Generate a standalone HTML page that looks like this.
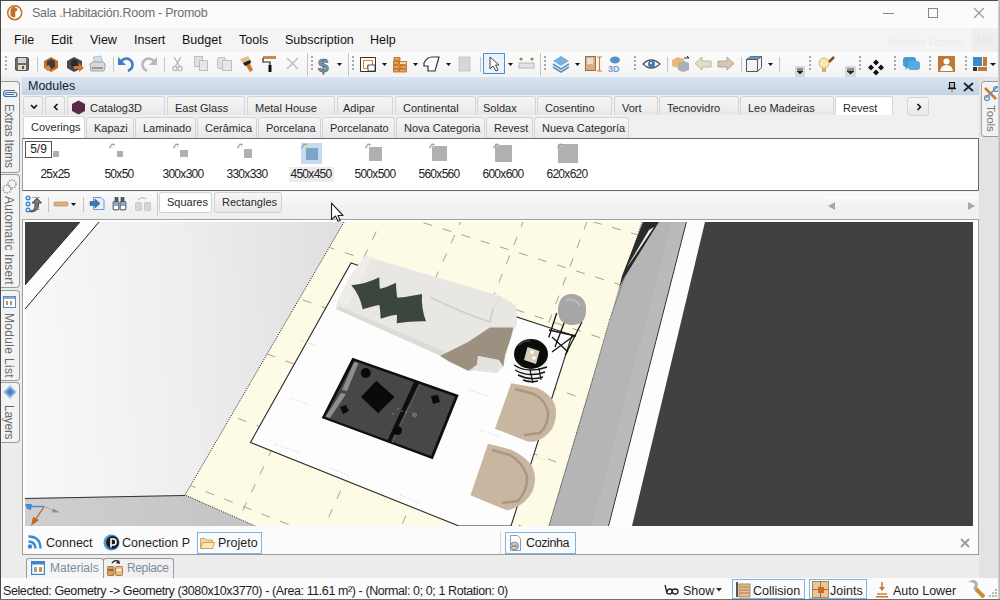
<!DOCTYPE html>
<html><head><meta charset="utf-8">
<style>
*{margin:0;padding:0;box-sizing:border-box}
html,body{width:1000px;height:600px;overflow:hidden;background:#ececec;font-family:"Liberation Sans",sans-serif;font-size:12px;color:#1e1e1e}
.a{position:absolute}
#title{left:0;top:0;width:1000px;height:28px;background:#fbfbfb;border-top:1px solid #4a4a4a}
#menu{left:0;top:28px;width:1000px;height:24px;background:#f4f4f4}
#menu span{position:absolute;top:5px;font-size:12.5px;color:#111}
#tb{left:0;top:52px;width:1000px;height:25px;background:linear-gradient(#fdfdfd,#f4f4f4)}
.sep{position:absolute;width:1px;background:#c8c8c8}
.grip{position:absolute;width:2px;border-left:2px dotted #a0a0a0}
#modhdr{left:22px;top:77px;width:957px;height:18px;background:linear-gradient(#d9e5f3,#c4d2e3)}
.tab{position:absolute;height:19px;border:1px solid #d4d4d4;border-bottom:none;border-radius:3px 3px 0 0;background:linear-gradient(#f6f6f6,#e8e8e8);font-size:11px;color:#2a2a2a;text-align:left;padding-left:7px;padding-top:1px;line-height:20px;white-space:nowrap}
.tab.sel{background:#fff}
.vt{position:absolute;left:1px;width:19px;border:1px solid #9a9a9a;border-left:none;border-radius:0 4px 4px 0;background:#f3f3f3}
.vt span{position:absolute;left:1px;writing-mode:vertical-rl;font-size:12px;color:#6a6a6a;white-space:nowrap}
.th{position:absolute;background:#b0b0b0}
.lbl{position:absolute;top:167px;font-size:12px;letter-spacing:-0.7px;color:#222;text-align:center;width:64px}
</style></head><body>
<!-- window border -->
<div class="a" style="left:0;top:0;width:1px;height:600px;background:#4a4a4a;z-index:50"></div>
<div class="a" style="left:998px;top:0;width:2px;height:600px;background:linear-gradient(90deg,#d8d8d8,#b0b0b0);z-index:50"></div>
<div class="a" style="left:0;top:599px;width:1000px;height:1px;background:#6e6e6e;z-index:50"></div>

<!-- TITLE -->
<div id="title" class="a">
  <svg class="a" style="left:6px;top:3px" width="18" height="18" viewBox="6 3 18 18"><circle cx="14.7" cy="11.7" r="7" fill="#fff" stroke="#c0702a" stroke-width="1.5"/><path d="M10.5,8.5 Q12,5.5 15,5.5 L15.5,7 L17.5,7.5 L17,10 L15.3,10.5 L15.3,16.5 Q12,17 10.5,14.5 Z" fill="#c0702a"/></svg>
  <span class="a" style="left:32px;top:5px;font-size:12.5px;letter-spacing:-0.24px;color:#6e6e6e">Sala .Habitación.Room - Promob</span>
  <div class="a" style="left:883px;top:12px;width:11px;height:1px;background:#888"></div>
  <div class="a" style="left:928px;top:7px;width:10px;height:10px;border:1px solid #888"></div>
  <svg class="a" style="left:973px;top:6px" width="12" height="12"><path d="M1 1L11 11M11 1L1 11" stroke="#999" stroke-width="1.2"/></svg>
</div>

<!-- MENU -->
<div id="menu" class="a">
  <span style="left:14px">File</span><span style="left:51px">Edit</span><span style="left:90px">View</span><span style="left:134px">Insert</span><span style="left:182px">Budget</span><span style="left:239px">Tools</span><span style="left:285px">Subscription</span><span style="left:370px">Help</span>
</div>

<!-- TOOLBAR -->
<div id="tb" class="a"></div>
<svg class="a" style="left:0;top:52px" width="1000" height="26" viewBox="0 52 1000 26">
  <!-- segment backgrounds / ends -->
  <rect x="1" y="52" width="999" height="25" fill="url(#tbg)"/>
  <defs><linearGradient id="tbg" x1="0" y1="0" x2="0" y2="1"><stop offset="0" stop-color="#fcfcfc"/><stop offset="1" stop-color="#f3f3f3"/></linearGradient></defs>
  <!-- grips -->
  <g fill="#a8a8a8">
    <rect x="5" y="56" width="2" height="2"/><rect x="5" y="60" width="2" height="2"/><rect x="5" y="64" width="2" height="2"/><rect x="5" y="68" width="2" height="2"/>
    <rect x="311" y="56" width="2" height="2"/><rect x="311" y="60" width="2" height="2"/><rect x="311" y="64" width="2" height="2"/><rect x="311" y="68" width="2" height="2"/>
    <rect x="352" y="56" width="2" height="2"/><rect x="352" y="60" width="2" height="2"/><rect x="352" y="64" width="2" height="2"/><rect x="352" y="68" width="2" height="2"/>
    <rect x="544" y="56" width="2" height="2"/><rect x="544" y="60" width="2" height="2"/><rect x="544" y="64" width="2" height="2"/><rect x="544" y="68" width="2" height="2"/>
    <rect x="634" y="56" width="2" height="2"/><rect x="634" y="60" width="2" height="2"/><rect x="634" y="64" width="2" height="2"/><rect x="634" y="68" width="2" height="2"/>
    <rect x="809" y="56" width="2" height="2"/><rect x="809" y="60" width="2" height="2"/><rect x="809" y="64" width="2" height="2"/><rect x="809" y="68" width="2" height="2"/>
    <rect x="859" y="56" width="2" height="2"/><rect x="859" y="60" width="2" height="2"/><rect x="859" y="64" width="2" height="2"/><rect x="859" y="68" width="2" height="2"/>
    <rect x="894" y="56" width="2" height="2"/><rect x="894" y="60" width="2" height="2"/><rect x="894" y="64" width="2" height="2"/><rect x="894" y="68" width="2" height="2"/>
    <rect x="929" y="56" width="2" height="2"/><rect x="929" y="60" width="2" height="2"/><rect x="929" y="64" width="2" height="2"/><rect x="929" y="68" width="2" height="2"/>
    <rect x="965" y="56" width="2" height="2"/><rect x="965" y="60" width="2" height="2"/><rect x="965" y="64" width="2" height="2"/><rect x="965" y="68" width="2" height="2"/>
  </g>
  <!-- separators -->
  <g fill="#c4c4c4">
    <rect x="37" y="57" width="1" height="15"/><rect x="113" y="57" width="1" height="15"/><rect x="164" y="57" width="1" height="15"/>
    <rect x="307" y="53" width="1" height="23"/><rect x="348" y="53" width="1" height="23"/>
    <rect x="480" y="57" width="1" height="15"/><rect x="540" y="53" width="1" height="23"/>
    <rect x="667" y="57" width="1" height="15"/><rect x="741" y="57" width="1" height="15"/><rect x="779" y="57" width="1" height="15"/>
  </g>
  <!-- dropdown arrows -->
  <g fill="#111">
    <path d="M337,63h5l-2.5,3z"/><path d="M382,63h5l-2.5,3z"/><path d="M413,63h5l-2.5,3z"/><path d="M446,63h5l-2.5,3z"/>
    <path d="M508,63h5l-2.5,3z"/><path d="M575,63h5l-2.5,3z"/><path d="M768,63h5l-2.5,3z"/><path d="M990,63h6l-3,3z"/>
  </g>
  <!-- save -->
  <rect x="15.5" y="57.5" width="13" height="13" rx="1.5" fill="#6b6b6b" stroke="#555"/>
  <rect x="18" y="58" width="8" height="5" fill="#d4d4d4"/>
  <rect x="18" y="65" width="8" height="5" fill="#e8dcc0"/><rect x="22" y="66" width="2" height="3" fill="#555"/>
  <!-- box icons -->
  <path d="M44,61 L51,57 L58,61 L58,68 L51,72 L44,68Z" fill="#c46e22"/>
  <path d="M47,61 L51,59 L55,61 L55,67 L51,69 L47,67Z" fill="#3d3d3d"/>
  <path d="M45,67 L49,65 L51,69 L47,71Z" fill="#d88a40"/>
  <path d="M67,61 L74,57 L82,61 L82,68 L74,72 L67,68Z" fill="#4a4a4a"/>
  <path d="M71,61 L74,59 L78,61 L78,65 L74,67 L71,65Z" fill="#2b2b2b"/>
  <path d="M74,66 L79,66 L79,63 L84,68 L79,72 L79,69 L74,69Z" fill="#d5782c"/>
  <!-- printer -->
  <path d="M93,57 L101,56 L103,63 L95,64Z" fill="#cde0f0" stroke="#8aa" stroke-width="0.5"/>
  <path d="M90,64 Q92,61 97,62 L103,62 Q106,63 105,67 L104,71 L91,71 Z" fill="#d8d8d8" stroke="#888" stroke-width="0.7"/>
  <rect x="92" y="67" width="11" height="2" fill="#9a9a9a"/>
  <!-- undo/redo -->
  <path d="M120,62 Q127,55 132,62 Q134,68 128,71" fill="none" stroke="#3c7fc4" stroke-width="2.6"/>
  <path d="M118,57 L118,65 L126,65Z" fill="#3c7fc4"/>
  <path d="M155,62 Q148,55 143,62 Q141,68 147,71" fill="none" stroke="#b8b8b8" stroke-width="2.6"/>
  <path d="M157,57 L157,65 L149,65Z" fill="#b8b8b8"/>
  <!-- scissors -->
  <path d="M174,57 L179.5,66 M181,57 L175.5,66" stroke="#b5b5b5" stroke-width="1.3"/>
  <circle cx="175" cy="68.5" r="2.2" fill="none" stroke="#b5b5b5" stroke-width="1.2"/><circle cx="180" cy="68.5" r="2.2" fill="none" stroke="#b5b5b5" stroke-width="1.2"/>
  <!-- copy -->
  <rect x="194.5" y="56.5" width="8" height="10" fill="#e0e0e0" stroke="#bdbdbd"/>
  <rect x="199.5" y="60.5" width="8" height="10" fill="#e6e6e6" stroke="#bdbdbd"/>
  <!-- paste -->
  <rect x="217.5" y="57.5" width="8" height="11" rx="2" fill="#e0e0e0" stroke="#c0c0c0"/>
  <rect x="222.5" y="60.5" width="9" height="10" fill="#e6e6e6" stroke="#bdbdbd"/>
  <!-- brush -->
  <path d="M240,59 L248,56 L252,62 L244,65Z" fill="#e2bf8a"/>
  <path d="M245,64 L249,62 L253,70 L250,72Z" fill="#c97832"/>
  <path d="M243,63 L250,60 L251,63 L245,66Z" fill="#222"/>
  <!-- roller -->
  <rect x="263" y="56" width="13" height="3" fill="#c98a4a"/><path d="M263,58 L263,62 L270,62 L270,65" fill="none" stroke="#222" stroke-width="1.2"/>
  <rect x="268.5" y="65" width="3" height="7" fill="#111"/>
  <!-- x grey -->
  <path d="M287,58 L298,69 M298,58 L287,69" stroke="#c0c0c0" stroke-width="1.6"/>
  <!-- dollar -->
  <text x="318" y="71.5" font-family="Liberation Sans" font-weight="bold" font-size="19" fill="#6f9dc4" stroke="#555" stroke-width="0.6">$</text>
  <!-- square icon -->
  <path d="M360.5,57.5 H375.5 V71.5 H360.5Z" fill="#fff" stroke="#333"/>
  <path d="M363.5,60.5 H372.5 V65.5 H367.5 V68.5 H363.5Z" fill="none" stroke="#c8883c"/>
  <rect x="368" y="65" width="7" height="6" fill="#fff" stroke="#333" stroke-width="0.8"/>
  <!-- bricks -->
  <g fill="#e8a050" stroke="#b86a20" stroke-width="0.8">
    <rect x="394" y="57.5" width="6" height="3"/><rect x="393.5" y="61.5" width="5" height="3"/><rect x="399.5" y="61.5" width="7" height="3" fill="#f4d8b0"/>
    <rect x="393.5" y="65.5" width="6" height="3"/><rect x="400.5" y="65.5" width="6" height="3"/>
    <rect x="393.5" y="69" width="5" height="3"/><rect x="399.5" y="69" width="7" height="3"/>
  </g>
  <!-- shape -->
  <path d="M424,63 Q427,57 432,57 L439,57 L435,71 L428,71 L428,66 L424,66Z" fill="#fff" stroke="#333" stroke-width="1.2"/>
  <!-- grey book -->
  <rect x="459" y="57" width="11" height="14" fill="#d6d6d6" stroke="#c8c8c8"/>
  <!-- cursor button -->
  <rect x="483.5" y="53.5" width="21" height="20" fill="#eaf2fb" stroke="#4a90d9"/>
  <path d="M490,57 L490,69 L493,66 L496,71 L498,70 L495.5,65 L499,65Z" fill="#fff" stroke="#444" stroke-width="1"/>
  <!-- ruler -->
  <circle cx="521" cy="59" r="1.6" fill="#b87a3a"/><circle cx="532" cy="59" r="1.6" fill="#b87a3a"/>
  <rect x="519" y="63" width="15" height="5" fill="#e4e4e4" stroke="#aaa" stroke-width="0.8"/>
  <!-- layers -->
  <path d="M553,61 L561,56 L569,61 L561,66Z" fill="#7ab0dc"/><path d="M553,64 L561,69 L569,64" fill="none" stroke="#5a90c0" stroke-width="1.5"/><path d="M553,67 L561,72 L569,67" fill="none" stroke="#5a90c0" stroke-width="1.5"/>
  <!-- door -->
  <rect x="585.5" y="56.5" width="10" height="14" fill="#d8b080" stroke="#9a7040"/><rect x="587" y="58" width="6" height="6" fill="#e6e0d8"/>
  <path d="M597,57 H602 M599.5,57 V71 M597,71 H602" stroke="#d07a28" stroke-width="1.2"/>
  <!-- 3D -->
  <ellipse cx="615" cy="60" rx="5" ry="3.5" fill="#5a8fc8"/>
  <text x="608" y="72" font-family="Liberation Sans" font-weight="bold" font-size="9" fill="#6f9cd0">3D</text>
  <!-- eye -->
  <path d="M643,64 Q651,56 660,64 Q651,72 643,64Z" fill="#fff" stroke="#555" stroke-width="1.2"/>
  <circle cx="651.5" cy="64" r="3.5" fill="#3a7fc4"/><circle cx="651" cy="63" r="1" fill="#fff"/>
  <!-- cube -->
  <path d="M672,60 L678,57 L684,59 L684,66 L678,68 L672,66Z" fill="#e8b878"/><path d="M678,63 L684,61 L689,63 L689,70 L683,72 L678,70Z" fill="#aab0b8"/>
  <path d="M684,58 L689,58 L687,56" stroke="#222" fill="none"/>
  <!-- arrows -->
  <path d="M695,63.5 L702,57 L702,61 L711,61 L711,67 L702,67 L702,70Z" fill="#e8dcc0" stroke="#aaa" stroke-width="0.8"/>
  <path d="M734,63.5 L727,57 L727,61 L718,61 L718,67 L727,67 L727,70Z" fill="#d8c8a8" stroke="#999" stroke-width="0.8"/>
  <!-- wire box -->
  <path d="M746.5,59.5 L750.5,56.5 L761.5,56.5 L761.5,67.5 L757.5,71.5 L746.5,71.5Z" fill="#f4f4f4" stroke="#555"/>
  <path d="M750.5,56.5 L761.5,56.5 L757.5,59.5 L746.5,59.5Z" fill="#5a9ad0"/>
  <path d="M757.5,59.5 V71.5 M746.5,59.5 H757.5 M757.5,59.5 L761.5,56.5" stroke="#555" fill="none"/>
  <!-- overflow buttons -->
  <rect x="795" y="66" width="10" height="11" rx="1" fill="#d8d8d8"/><path d="M797,69h6 M797,71h6l-3,3z" stroke="#222" fill="#222" stroke-width="0.8"/>
  <rect x="845" y="66" width="11" height="11" rx="1" fill="#d8d8d8"/><path d="M847,69h7 M847,71h7l-3.5,3z" stroke="#222" fill="#222" stroke-width="0.8"/>
  <!-- bulb -->
  <circle cx="824" cy="63" r="5" fill="#fbe8b0" stroke="#e0b860" stroke-width="1"/><rect x="822" y="68" width="4" height="4" fill="#c8b080"/>
  <path d="M829,62 L834,57" stroke="#8a4a20" stroke-width="2.5"/>
  <!-- 4 diamond -->
  <g fill="#111"><path d="M876,59.5 l3,3 l-3,3 l-3,-3z"/><path d="M871,64.5 l3,3 l-3,3 l-3,-3z"/><path d="M881,64.5 l3,3 l-3,3 l-3,-3z"/><path d="M876,69.5 l3,3 l-3,3 l-3,-3z"/></g>
  <!-- chat -->
  <rect x="903" y="57" width="13" height="10" rx="3" fill="#4a9ad8"/><path d="M906,66 L905,70 L910,66Z" fill="#4a9ad8"/>
  <rect x="908" y="61" width="12" height="9" rx="3" fill="#5aaae0"/>
  <!-- person -->
  <rect x="938" y="56" width="17" height="16" fill="#c07838"/><circle cx="946.5" cy="61.5" r="3" fill="#fff"/><path d="M940,71 Q941,65 946.5,65 Q952,65 953,71Z" fill="#fff"/>
  <!-- layout -->
  <rect x="973" y="57" width="9" height="9" fill="#3a8ad0"/><rect x="983" y="57" width="4" height="9" fill="#c07838"/><rect x="973" y="67" width="4" height="4" fill="#333"/><rect x="978" y="67" width="9" height="4" fill="#c07838"/>
</svg>

<!-- LEFT STRIP -->
<div class="vt" style="top:81px;height:92px"><span style="top:22px;letter-spacing:-0.25px">Extras Items</span>
 <svg class="a" style="left:1px;top:7px" width="16" height="9"><path d="M13,1.5 H4 Q1.5,1.5 1.5,4.5 Q1.5,7.5 4,7.5 H13 Q15,7.5 15,5.5 Q15,3.5 13,3.5 H5 Q3.5,3.5 3.5,4.5 Q3.5,5.5 5,5.5 H12" fill="none" stroke="#3a6ea8" stroke-width="1.1"/></svg></div>
<div class="vt" style="top:174px;height:114px"><span style="top:21px;letter-spacing:0.13px">Automatic Insert</span>
 <svg class="a" style="left:1px;top:4px" width="16" height="15"><circle cx="10" cy="5" r="4" fill="none" stroke="#9a9a9a" stroke-width="1.5" stroke-dasharray="1.5,1"/><circle cx="5" cy="10" r="4" fill="none" stroke="#9a9a9a" stroke-width="1.5" stroke-dasharray="1.5,1"/></svg></div>
<div class="vt" style="top:290px;height:91px"><span style="top:22px;letter-spacing:0.33px">Module List</span>
 <svg class="a" style="left:2px;top:5px" width="13" height="12"><rect x="0.5" y="0.5" width="12" height="11" fill="#fff" stroke="#5a8ac0"/><rect x="1" y="1" width="11" height="2" fill="#8ab0d8"/><path d="M4,5 V9 M8,5 V9" stroke="#b06a30" stroke-width="1.5"/></svg></div>
<div class="vt" style="top:382px;height:61px"><span style="top:22px;letter-spacing:-0.28px">Layers</span>
 <svg class="a" style="left:1px;top:1px" width="16" height="16"><path d="M1,8 L8,1 L15,8 L8,15Z" fill="#a8c8e8"/><path d="M3,8 L8,3 L13,8 L8,13Z" fill="#6a9ed0"/><path d="M5,8 L8,5 L11,8 L8,11Z" fill="#4a80c0"/></svg></div>

<!-- RIGHT STRIP -->
<div class="a" style="left:979px;top:77px;width:19px;height:501px;background:#e3e3e3"></div>
<div class="vt" style="left:981px;top:81px;height:56px;border-left:1px solid #a8a8a8;border-radius:4px 0 0 4px;border-right:none;width:19px"><span style="top:23px;left:3px;font-size:11.5px;color:#777">Tools</span>
 <svg class="a" style="left:1px;top:3px" width="17" height="17"><path d="M2,3 L13,14" stroke="#d07a28" stroke-width="2.5"/><path d="M14,2 L3,13" stroke="#5a8ac0" stroke-width="1.5"/><circle cx="13" cy="4" r="2.5" fill="none" stroke="#5a8ac0" stroke-width="1.2"/><circle cx="4" cy="13" r="2.5" fill="none" stroke="#5a8ac0" stroke-width="1.2"/></svg></div>

<!-- MODULES PANEL -->
<div id="modhdr" class="a"><span class="a" style="left:6px;top:2px;font-size:12.5px;color:#1a1a2a">Modules</span>
<svg class="a" style="left:925px;top:4px" width="30" height="12"><path d="M2.5,1.5 H7.5 V7 H2.5Z" fill="#b8b8b8" stroke="#111" stroke-width="1.1"/><path d="M1,7.5 H9" stroke="#111" stroke-width="1.4"/><path d="M5,8 V11.5" stroke="#777" stroke-width="1"/><path d="M17,2 L26,10 M26,2 L17,10" stroke="#222" stroke-width="1.7"/></svg></div>

<div class="a" style="left:22px;top:95px;width:957px;height:124px;background:#f0f0f0"></div>
<!-- catalog tabs -->
<div class="tab" style="left:23px;top:96px;width:20px"><svg class="a" style="left:6px;top:7px" width="8" height="6"><path d="M1,1 L4,4 L7,1" fill="none" stroke="#111" stroke-width="1.6"/></svg></div>
<div class="tab" style="left:45px;top:96px;width:20px"><svg class="a" style="left:7px;top:6px" width="6" height="8"><path d="M4.5,1 L1.5,4 L4.5,7" fill="none" stroke="#111" stroke-width="1.6"/></svg></div>
<div class="tab" style="left:67px;top:96px;width:98px;text-align:left;padding-left:22px">Catalog3D<svg class="a" style="left:3px;top:3px" width="15" height="15"><path d="M7.5,0.5 L14,4 L14,11 L7.5,14.5 L1,11 L1,4Z" fill="#5a2848"/></svg></div>
<div class="tab" style="left:167px;top:96px;width:78px">East Glass</div>
<div class="tab" style="left:247px;top:96px;width:88px">Metal House</div>
<div class="tab" style="left:337px;top:96px;width:56px;padding-left:5px">Adipar</div>
<div class="tab" style="left:395px;top:96px;width:81px">Continental</div>
<div class="tab" style="left:477px;top:96px;width:59px;padding-left:5px">Soldax</div>
<div class="tab" style="left:537px;top:96px;width:75px">Cosentino</div>
<div class="tab" style="left:614px;top:96px;width:44px">Vort</div>
<div class="tab" style="left:659px;top:96px;width:80px">Tecnovidro</div>
<div class="tab" style="left:740px;top:96px;width:94px">Leo Madeiras</div>
<div class="tab sel" style="left:835px;top:96px;width:58px">Revest</div>
<div class="tab" style="left:907px;top:97px;width:22px;height:19px;border-bottom:1px solid #d4d4d4;border-radius:3px"><svg class="a" style="left:8px;top:5px" width="6" height="8"><path d="M1.5,1 L4.5,4 L1.5,7" fill="none" stroke="#111" stroke-width="1.6"/></svg></div>

<!-- category tabs -->
<div class="tab sel" style="left:23px;top:116px;width:62px;height:22px;padding-top:0">Coverings</div>
<div class="tab" style="left:86px;top:117px;width:48px;height:21px;padding-top:0">Kapazi</div>
<div class="tab" style="left:135px;top:117px;width:61px;height:21px;padding-top:0">Laminado</div>
<div class="tab" style="left:197px;top:117px;width:60px;height:21px;padding-top:0">Cerâmica</div>
<div class="tab" style="left:258px;top:117px;width:63px;height:21px;padding-top:0">Porcelana</div>
<div class="tab" style="left:322px;top:117px;width:73px;height:21px;padding-top:0">Porcelanato</div>
<div class="tab" style="left:396px;top:117px;width:89px;height:21px;padding-top:0">Nova Categoria</div>
<div class="tab" style="left:486px;top:117px;width:47px;height:21px;padding-top:0">Revest</div>
<div class="tab" style="left:534px;top:117px;width:95px;height:21px;padding-top:0">Nueva Categoría</div>

<!-- thumbnails -->
<div class="a" style="left:22px;top:138px;width:957px;height:53px;background:#fff;border:1px solid #6a6a6a;border-left-color:#a0a0a0"></div>
<div class="a" style="left:25px;top:141px;width:27px;height:17px;border:1px solid #555;background:#fff;font-size:12px;text-align:center;line-height:15px">5/9</div>
<div class="th" style="left:53px;top:151px;width:6px;height:6px"></div>
<div class="th" style="left:117px;top:151px;width:6px;height:6px"></div>
<div class="th" style="left:180px;top:150px;width:8px;height:7px"></div>
<div class="th" style="left:244px;top:149px;width:8px;height:9px"></div>
<div class="a" style="left:301px;top:143px;width:21px;height:21px;background:#c6dbef"></div>
<div class="th" style="left:306px;top:148px;width:12px;height:12px;background:#7ea5c8"></div>
<div class="a" style="left:289px;top:167px;width:45px;height:15px;background:#ececec"></div>
<div class="th" style="left:369px;top:147px;width:13px;height:14px"></div>
<div class="th" style="left:432px;top:146px;width:15px;height:15px"></div>
<div class="th" style="left:495px;top:145px;width:17px;height:17px"></div>
<div class="th" style="left:558px;top:144px;width:20px;height:19px"></div>
<svg class="a" style="left:109px;top:143px" width="6" height="6"><path d="M0.5,5 L3.5,1" stroke="#7ab0e0" stroke-width="1.3"/><circle cx="3" cy="1.3" r="0.9" fill="#e0a060"/><circle cx="4.8" cy="1.3" r="0.9" fill="#c08050"/><path d="M4.8,2 V4.5" stroke="#e8e0b0" stroke-width="1"/></svg><svg class="a" style="left:173px;top:143px" width="6" height="6"><path d="M0.5,5 L3.5,1" stroke="#7ab0e0" stroke-width="1.3"/><circle cx="3" cy="1.3" r="0.9" fill="#e0a060"/><circle cx="4.8" cy="1.3" r="0.9" fill="#c08050"/><path d="M4.8,2 V4.5" stroke="#e8e0b0" stroke-width="1"/></svg><svg class="a" style="left:237px;top:143px" width="6" height="6"><path d="M0.5,5 L3.5,1" stroke="#7ab0e0" stroke-width="1.3"/><circle cx="3" cy="1.3" r="0.9" fill="#e0a060"/><circle cx="4.8" cy="1.3" r="0.9" fill="#c08050"/><path d="M4.8,2 V4.5" stroke="#e8e0b0" stroke-width="1"/></svg><svg class="a" style="left:301px;top:143px" width="6" height="6"><path d="M0.5,5 L3.5,1" stroke="#7ab0e0" stroke-width="1.3"/><circle cx="3" cy="1.3" r="0.9" fill="#e0a060"/><circle cx="4.8" cy="1.3" r="0.9" fill="#c08050"/><path d="M4.8,2 V4.5" stroke="#e8e0b0" stroke-width="1"/></svg><svg class="a" style="left:365px;top:143px" width="6" height="6"><path d="M0.5,5 L3.5,1" stroke="#7ab0e0" stroke-width="1.3"/><circle cx="3" cy="1.3" r="0.9" fill="#e0a060"/><circle cx="4.8" cy="1.3" r="0.9" fill="#c08050"/><path d="M4.8,2 V4.5" stroke="#e8e0b0" stroke-width="1"/></svg><svg class="a" style="left:429px;top:143px" width="6" height="6"><path d="M0.5,5 L3.5,1" stroke="#7ab0e0" stroke-width="1.3"/><circle cx="3" cy="1.3" r="0.9" fill="#e0a060"/><circle cx="4.8" cy="1.3" r="0.9" fill="#c08050"/><path d="M4.8,2 V4.5" stroke="#e8e0b0" stroke-width="1"/></svg><svg class="a" style="left:493px;top:143px" width="6" height="6"><path d="M0.5,5 L3.5,1" stroke="#7ab0e0" stroke-width="1.3"/><circle cx="3" cy="1.3" r="0.9" fill="#e0a060"/><circle cx="4.8" cy="1.3" r="0.9" fill="#c08050"/><path d="M4.8,2 V4.5" stroke="#e8e0b0" stroke-width="1"/></svg><svg class="a" style="left:557px;top:143px" width="6" height="6"><path d="M0.5,5 L3.5,1" stroke="#7ab0e0" stroke-width="1.3"/><circle cx="3" cy="1.3" r="0.9" fill="#e0a060"/><circle cx="4.8" cy="1.3" r="0.9" fill="#c08050"/><path d="M4.8,2 V4.5" stroke="#e8e0b0" stroke-width="1"/></svg>
<div class="lbl" style="left:23px">25x25</div>
<div class="lbl" style="left:87px">50x50</div>
<div class="lbl" style="left:151px">300x300</div>
<div class="lbl" style="left:215px">330x330</div>
<div class="lbl" style="left:279px">450x450</div>
<div class="lbl" style="left:343px">500x500</div>
<div class="lbl" style="left:407px">560x560</div>
<div class="lbl" style="left:471px">600x600</div>
<div class="lbl" style="left:535px">620x620</div>

<!-- tool row -->
<div class="a" style="left:23px;top:192px;width:955px;height:26px;background:linear-gradient(#fafafa,#f0f0f0 70%)"></div>
<svg class="a" style="left:22px;top:192px" width="140" height="26" viewBox="22 192 140 26">
  <g fill="#fff" stroke="#3a86d0" stroke-width="1.4"><circle cx="28" cy="198" r="1.8"/><circle cx="28" cy="204" r="1.8"/><circle cx="28" cy="210" r="1.8"/></g>
  <path d="M31.5,197.5 H40 M33,209.5 H40" stroke="#aaa" stroke-width="1"/>
  <path d="M30,211 Q35,211 35,205 L35,203 L32,203 L37,198 L41.5,203 L38.5,203 L38.5,206 Q38,211.5 31,212Z" fill="#7a7a7a" stroke="#333" stroke-width="0.8"/>
  <rect x="48" y="197" width="1" height="15" fill="#c4c4c4"/>
  <rect x="54" y="202" width="14" height="4" rx="1" fill="#e0b080" stroke="#b88048" stroke-width="0.6"/>
  <path d="M71,203 H76 L73.5,206Z" fill="#111"/>
  <rect x="83" y="197" width="1" height="15" fill="#c4c4c4"/>
  <path d="M93.5,197.5 H101 L104,200.5 V209.5 H93.5Z" fill="#e6f0fa" stroke="#5a90c8" stroke-width="0.9"/>
  <path d="M90,201.5 H95 V199 L100,203.5 L95,208 V205.5 H90Z" fill="#3a78b8" stroke="#2a5a90" stroke-width="0.6"/>
  <g fill="#506070" stroke="#333" stroke-width="0.6">
    <rect x="115" y="197.5" width="3" height="4"/><rect x="121" y="197.5" width="3" height="4"/>
    <rect x="113" y="201.5" width="6" height="8.5" rx="1" fill="#8aa8c8"/><rect x="120" y="201.5" width="6" height="8.5" rx="1" fill="#8aa8c8"/>
  </g>
  <rect x="114" y="206" width="4" height="3" fill="#fff"/><rect x="121" y="206" width="4" height="3" fill="#fff"/>
  <path d="M138,200 Q142,196 146,199" fill="none" stroke="#c8c8c8" stroke-width="1.3"/>
  <rect x="135.5" y="202.5" width="6" height="8" rx="1" fill="#d6d6d6" stroke="#c8c8c8"/><rect x="144.5" y="202.5" width="6" height="8" rx="1" fill="#d6d6d6" stroke="#c8c8c8"/>
  <rect x="157" y="192" width="1" height="24" fill="#c8c8c8"/>
</svg>
<svg class="a" style="left:826px;top:200px" width="152" height="12"><path d="M2,6 L9,2 L9,10Z" fill="#a8a8a8"/><path d="M149,6 L142,2 L142,10Z" fill="#a8a8a8"/></svg>
<div class="a" style="left:823px;top:197px;width:156px;height:1px;background:#fff"></div>
<div class="tab sel" style="left:159px;top:192px;width:53px;height:21px;border-radius:3px;border-bottom:1px solid #d2d2d2;padding-top:0;line-height:18px">Squares</div>
<div class="tab" style="left:214px;top:192px;width:68px;height:21px;border-radius:3px;border-bottom:1px solid #d2d2d2;padding-top:0;line-height:18px">Rectangles</div>

<!-- VIEWPORT -->
<div class="a" style="left:22px;top:219px;width:957px;height:336px;background:#fff;border:1px solid #a0a0a0"></div>
<svg class="a" style="left:25px;top:222px" width="948" height="304" viewBox="25 222 948 304">
  <defs>
    <linearGradient id="wall" gradientUnits="userSpaceOnUse" x1="25" y1="300" x2="345" y2="285">
      <stop offset="0" stop-color="#f8f8f8"/><stop offset="0.5" stop-color="#eeeeee"/><stop offset="1" stop-color="#dfdfdf"/>
    </linearGradient>
    <linearGradient id="gfloor" x1="0" y1="0" x2="1" y2="0">
      <stop offset="0" stop-color="#cfcfcf"/><stop offset="1" stop-color="#c4c4c4"/>
    </linearGradient>
    <clipPath id="vp"><rect x="25" y="222" width="948" height="304"/></clipPath>
  </defs>
  <g clip-path="url(#vp)">
  <rect x="25" y="222" width="948" height="304" fill="url(#wall)"/>
  <!-- top-left dark -->
  <polygon points="25,222 80,222 25,285" fill="#3f4140"/>
  <polygon points="80,222 99,222 25,309 25,285" fill="#fdfdfd"/>
  <path d="M80,222 L25,285 M99,222 L25,309" stroke="#222" stroke-width="1"/>
  <!-- wall bottom / grey floor -->
  <polygon points="25,498 185,495 255,526 25,526" fill="url(#gfloor)"/>
  <path d="M25,498.5 L185,495.5" stroke="#333" stroke-width="1.2"/>
  <!-- cream floor -->
  <polygon points="344,222 642,222 621,286 591,385 549,526 255,526 185,495" fill="#fdfbe6"/>
  <path d="M344,222 L185,495 L255,526" fill="none" stroke="#333" stroke-width="1" stroke-dasharray="1.2,1.2"/>
  <path d="M642,222 L621,286 L591,385 L549,526" fill="none" stroke="#555" stroke-width="1" stroke-dasharray="1.2,1.2"/>
  <!-- floor dashes -->
  <clipPath id="flc"><polygon points="344,222 642,222 621,286 591,385 549,526 255,526 185,495"/></clipPath>
  <g clip-path="url(#flc)" stroke="#9a968a" stroke-width="0.9" stroke-dasharray="9,11" fill="none">
    <path d="M250,122 L700,253" stroke-dashoffset="3"/>
    <path d="M250,168 L700,310" stroke-dashoffset="-2"/>
    <path d="M250,221 L700,371" stroke-dashoffset="0"/>
    <path d="M250,281.4 L700,439.8" stroke-dashoffset="4"/>
    <path d="M250,347.5 L700,515.9" stroke-dashoffset="2"/>
    <path d="M150,385 L700,594" stroke-dashoffset="6"/>
    <path d="M150,469.5 L400,568.7" stroke-dashoffset="0"/>
    <path d="M400,182 L230,537" stroke-dashoffset="5"/>
    <path d="M478,183 L323,530" stroke-dashoffset="3"/>
    <path d="M539,182 L400,530" stroke-dashoffset="1"/>
    <path d="M599,190 L470,530" stroke-dashoffset="7"/>
  </g>
  <!-- grey band right -->
  <polygon points="659,222 686,222 608,526 549,526 591,385 619,287" fill="#b5b5b5"/>
  <polygon points="672,222 686,222 608,526 592,526" fill="#bababa"/>
  <polygon points="643,222 659,222 623,280 619,288 622,276" fill="#2a2a2a"/>
  <polygon points="649,230 654,227 630,263 627,267" fill="#f0f0f0"/>
  <path d="M625,276 L609.6,320 L591,385 L549,526" fill="none" stroke="#555" stroke-width="1" stroke-dasharray="1.2,1.2"/>
  <!-- white band -->
  <polygon points="686,222 706,222 633,526 608,526" fill="#fdfdfd"/>
  <path d="M686.4,222 L608.5,526" stroke="#2a2a2a" stroke-width="1"/>
  <!-- dark -->
  <polygon points="705,222 973,222 973,526 632,526" fill="#404241"/>
  <!-- rug -->
  <polygon points="351,263 572,335 511,526 459,526 250.5,442.5" fill="#fdfdfd" stroke="#2a2a2a" stroke-width="1.1"/>
  <g stroke="#bcbcbc" stroke-width="1" stroke-dasharray="1,2" fill="none" opacity="0.8">
    <path d="M275,444 L300,453"/><path d="M330,468 L350,476"/><path d="M400,495 L420,503"/>
    <path d="M290,398 L310,405"/><path d="M470,390 L490,397"/><path d="M480,430 L500,437"/>
    <path d="M300,340 L315,345"/><path d="M530,455 L545,460"/>
  </g>
  <!-- sofa -->
  <path d="M365,256 L500,296 L516,305 L517,324 L510,340 L503,367 L497,373 L476,370 L468,371 L441,356 L336,309 L337,301 Z" fill="#e9e7e3"/>
  <path d="M336,309 L441,356 L468,371 L476,370 L470,364 L446,352 L339,306Z" fill="#dddbd6"/>
  <path d="M337,302 L350,276 L365,256 L372,258 L348,306Z" fill="#efede9"/>
  <path d="M430,297 Q460,312 490,322" stroke="#d0cec9" stroke-width="1.5" fill="none"/>
  <path d="M493,308 L490,322" stroke="#d0cec9" stroke-width="1.5" fill="none"/>
  <path d="M500,296 L493,310" stroke="#dcdad5" stroke-width="1" fill="none"/>
  <!-- pillows -->
  <g fill="#3b473e">
    <path d="M351.3,285.3 Q366,284 379.3,277.3 Q379,293 384,304 Q372,306 362.7,309.3 Q360,295 351.3,285.3Z"/>
    <path d="M376,290 Q386,288 396,282.7 Q396,298 401,314 Q390,315 380.7,318.7 Q380,302 376,290Z"/>
    <path d="M393,298 Q408,297 422,294 Q421,308 426,321.3 Q411,321 396.7,323.3 Q398,310 393,298Z"/>
  </g>
  <!-- blanket -->
  <path d="M440,356 L468,342 L490,327.5 L513.3,327.5 L510.8,338 L505,355 L503.3,366.7 L499,360 L478,356 L476.7,365 L468.3,370.8 L450,362Z" fill="#9c9081"/>
  <path d="M478.3,356 L498.3,360 L496.7,373 L476.7,371Z" fill="#e4e2de"/>
  <!-- coffee table -->
  <polygon points="352.4,357.7 458.7,395.1 432.8,459.3 321.7,418.1" fill="#0e0e0e"/>
  <polygon points="354.5,361 455,396.5 431,456 325,417" fill="#474747"/>
  <polygon points="354,362 358.5,363 347,391 342,390" fill="#8e8e8e"/>
  <polygon points="341,393 346,394 330,418 325.5,416.5" fill="#8e8e8e"/>
  <polygon points="414.6,380.7 419.4,382.6 390.7,442 386.8,442" fill="#0e0e0e"/>
  <path d="M420,384 L392,443" stroke="#666" stroke-width="0.8"/>
  <polygon points="376.3,380.7 394.5,397 378.2,413.3 361,397" fill="#0a0a0a"/>
  <circle cx="365.8" cy="373" r="5" fill="#0a0a0a"/>
  <polygon points="340,407 346,405 349,411 343,414" fill="#0a0a0a"/>
  <polygon points="431,396 438,395 440,402 433,404" fill="#0a0a0a"/>
  <circle cx="397.4" cy="430.5" r="4.5" fill="#0a0a0a"/>
  <circle cx="414.6" cy="415" r="3.5" fill="#6a6a6a" stroke="#333" stroke-width="0.8"/>
  <circle cx="410" cy="410" r="3" fill="none" stroke="#555" stroke-width="0.8"/>
  <g fill="#b08898"><circle cx="398" cy="409" r="0.7"/><circle cx="402" cy="411" r="0.7"/><circle cx="393" cy="414" r="0.7"/><circle cx="406" cy="412" r="0.7"/></g>
  <!-- lamp -->
  <g stroke="#111" stroke-width="1.3" fill="none">
    <path d="M556.7,313 L548.8,337.5"/><path d="M582,321.8 L565.4,355"/><path d="M566,318 L555,347"/>
    <path d="M549,330 L576,336"/><path d="M552,337 L568,352"/><path d="M575,335 L552,352"/>
  </g>
  <path d="M573,294 Q587,296 586,312 Q585,326 570,325 Q557,323 558,308 Q560,293 573,294Z" fill="#a6a6a6"/>
  <path d="M566,300 Q576,298 580,306" stroke="#bdbdbd" stroke-width="2" fill="none"/>
  <!-- pouf -->
  <path d="M514,362 Q515,378 527,382 Q540,384 546,372 L548,358Z" fill="#f2f2f2"/>
  <path d="M514,365 Q528,374 547,367 M515,370 Q529,378 545,372 M518,375 Q530,381 543,377 M523,380 Q531,383 538,381" stroke="#141414" stroke-width="1.4" fill="none"/>
  <path d="M530,370 L533,383 M539,368 L541,380" stroke="#141414" stroke-width="1.2"/>
  <ellipse cx="531" cy="354" rx="17" ry="15" fill="#0c0c0c"/>
  <path d="M519,345 Q524,340 530,341" stroke="#2a4030" stroke-width="2" fill="none"/>
  <polygon points="527.5,347 539.5,351 536,364 524,360" fill="#d8cdb8"/>
  <circle cx="532" cy="352" r="1.8" fill="#fff"/><circle cx="534" cy="358" r="1.8" fill="#fff"/>
  <!-- armchairs -->
  <path d="M511.3,383.2 L537,387.8 Q551,394 555,405 Q558,416 552.2,428.7 Q546,438 535,441.5 Q531,442 527.7,441.5 L495,428.7 Z" fill="#c8b6a0"/>
  <path d="M515,389 L534,394 Q546,401 548,412 Q549,424 540,433 L524,435" stroke="#a99783" stroke-width="2.5" fill="none"/>
  <path d="M488,443.8 L511.3,449.7 Q525,456 532,466 Q538,478 532.3,491.7 Q526,504 512,509 Q508,510.5 506.7,510.3 L470.5,495.2 Z" fill="#c8b6a0"/>
  <path d="M492,450 L510,455 Q523,463 527,476 Q528,490 518,501 L502,503" stroke="#a99783" stroke-width="2.5" fill="none"/>
  <!-- axes -->
  <path d="M29,506.5 L44,506.5" stroke="#4a8ad0" stroke-width="1.5"/><path d="M25,504 L32,504 L31,510 L27,509Z" fill="#4a8ad0"/>
  <path d="M44,506.5 L55,511" stroke="#9a9a9a" stroke-width="0.7"/><path d="M53,508.5 L60,512.5 L52,512.5Z" fill="#8a9098"/>
  <path d="M44,507 L35,520" stroke="#c06a20" stroke-width="1.3"/><path d="M31,526 L33,517 L39,520Z" fill="#c06a20"/>
  </g>
</svg>

<!-- bottom row -->
<div class="a" style="left:23px;top:526px;width:955px;height:28px;background:#fbfbfb"></div>
<svg class="a" style="left:27px;top:535px" width="16" height="15"><circle cx="3" cy="11.5" r="2.2" fill="#3a88d0"/><path d="M1.5,6.5 Q8,6.5 8.5,13.5" fill="none" stroke="#3a88d0" stroke-width="2.4"/><path d="M1.5,1.5 Q13.5,1.5 13.5,13.5" fill="none" stroke="#3a88d0" stroke-width="2.4"/></svg>
<span class="a" style="left:46px;top:536px;font-size:12.5px">Connect</span>
<svg class="a" style="left:103px;top:534px" width="17" height="17"><circle cx="8.5" cy="8.5" r="8" fill="#4a9ad8"/><circle cx="9.5" cy="8.5" r="6.5" fill="#1e1e1e"/><path d="M8,13.5 V5 H10.5 Q13,5 13,8 Q13,11 10.5,11 H8" fill="none" stroke="#fff" stroke-width="1.6"/></svg>
<span class="a" style="left:122px;top:536px;font-size:12.5px">Conection P</span>
<div class="a" style="left:197px;top:532px;width:65px;height:22px;border:1px solid #7eb4e2;background:#f9fbfd"></div>
<svg class="a" style="left:200px;top:536px" width="15" height="13"><path d="M0.5,2.5 H5 L6.5,4 H12.5 V12.5 H0.5Z" fill="#f3d89a" stroke="#c8a060" stroke-width="0.9"/><path d="M0.5,12.5 L3,6.5 H14.5 L12.5,12.5Z" fill="#fbe8b8" stroke="#c8a060" stroke-width="0.9"/></svg>
<span class="a" style="left:218px;top:536px;font-size:12.5px">Projeto</span>
<div class="a" style="left:500px;top:531px;width:1px;height:23px;background:#d8d8d8"></div>
<div class="a" style="left:505px;top:532px;width:71px;height:22px;border:1px solid #7eb4e2;background:#f9fbfd"></div>
<svg class="a" style="left:508px;top:535px" width="15" height="16"><path d="M2.5,0.5 H9.5 L12.5,3.5 V15.5 H2.5Z" fill="#fff" stroke="#8a9ab0"/><circle cx="6.5" cy="11" r="4" fill="#c0c8d0" stroke="#6a7a90" stroke-width="0.8"/><path d="M4,11 H9" stroke="#c07838" stroke-width="1.5"/></svg>
<span class="a" style="left:526px;top:536px;font-size:12.5px;letter-spacing:-0.4px">Cozinha</span>
<svg class="a" style="left:960px;top:538px" width="10" height="10"><path d="M1,1 L9,9 M9,1 L1,9" stroke="#9a9a9a" stroke-width="1.8"/></svg>
<div class="a" style="left:22px;top:554px;width:957px;height:1px;background:#9a9a9a"></div>

<!-- materials tabs -->
<div class="a" style="left:26px;top:558px;width:78px;height:21px;border:1px solid #9a9a9a;border-bottom:none;border-radius:3px 3px 0 0;background:#f6f6f6"></div>
<div class="a" style="left:103px;top:558px;width:71px;height:21px;border:1px solid #9a9a9a;border-bottom:none;border-radius:3px 3px 0 0;background:#f0f0f0"></div>
<svg class="a" style="left:31px;top:561px" width="14" height="14"><rect x="0.5" y="0.5" width="13" height="13" fill="#fff" stroke="#3a86d0" stroke-width="1.4"/><rect x="0.5" y="0.5" width="13" height="3" fill="#3a86d0"/><rect x="3" y="6" width="3" height="5" fill="#8aa"/><rect x="8" y="6" width="3" height="5" fill="#d09050"/></svg>
<span class="a" style="left:50px;top:561px;font-size:12px;color:#7b8b9b">Materials</span>
<svg class="a" style="left:107px;top:559px" width="16" height="17"><path d="M5,4 Q8,0 12,3" fill="none" stroke="#222" stroke-width="1.3"/><path d="M12,1 L13,5 L9,4Z" fill="#222"/><rect x="0.5" y="7.5" width="6.5" height="9" rx="1" fill="#d8a060" stroke="#9a6030" stroke-width="0.8"/><rect x="8.5" y="7.5" width="7" height="9" rx="1" fill="#e6c080" stroke="#9a6030" stroke-width="0.8"/><rect x="1.5" y="10" width="4.5" height="2" fill="#9a6030"/><rect x="9.5" y="10" width="5" height="2" fill="#fff0d0"/></svg>
<span class="a" style="left:127px;top:561px;font-size:12px;letter-spacing:-0.37px;color:#7b8b9b">Replace</span>

<!-- STATUS -->
<div class="a" style="left:0;top:578px;width:1000px;height:22px;background:#fbfbfb"></div>
<span class="a" style="left:3px;top:584px;font-size:12.5px;letter-spacing:-0.41px">Selected: Geometry -&gt; Geometry (3080x10x3770) - (Area: 11.61 m²) - (Normal: 0; 0; 1 Rotation: 0)</span>
<svg class="a" style="left:664px;top:584px" width="17" height="12"><path d="M1,1 L3,9 M3,9 Q3,5 6,5 Q8,5 8,7.5 Q8,10 5.5,10 Q3,10 3,9 M8,7.5 Q8,5 11,5 Q14,5 14,7.5 Q14,10 11,10 Q8.5,10 8.5,7.5" fill="none" stroke="#222" stroke-width="1.3"/></svg>
<span class="a" style="left:683px;top:584px;font-size:12.5px">Show</span>
<svg class="a" style="left:716px;top:588px" width="6" height="4"><path d="M0,0 H6 L3,3.5Z" fill="#333"/></svg>
<div class="a" style="left:732px;top:579px;width:73px;height:20px;border:1px solid #7eb4e2;background:#f9fbfd"></div>
<svg class="a" style="left:735px;top:581px" width="17" height="17"><rect x="1" y="1" width="2" height="15" fill="#555"/><rect x="4" y="3" width="11" height="13" fill="#e0c090" stroke="#a07040" stroke-width="0.8"/><path d="M5,6 H14 M5,9 H14 M5,12 H14" stroke="#a07040" stroke-width="0.8"/></svg>
<span class="a" style="left:753px;top:584px;font-size:12.5px">Collision</span>
<div class="a" style="left:809px;top:579px;width:58px;height:20px;border:1px solid #7eb4e2;background:#f9fbfd"></div>
<svg class="a" style="left:812px;top:581px" width="17" height="17"><rect x="0.5" y="0.5" width="16" height="16" fill="#e8c898" stroke="#a07040" stroke-width="0.8"/><path d="M8.5,0 V17 M0,8.5 H17" stroke="#a07040"/><rect x="6" y="6" width="6" height="6" fill="#d06820"/></svg>
<span class="a" style="left:830px;top:584px;font-size:12.5px">Joints</span>
<svg class="a" style="left:876px;top:581px" width="12" height="17"><path d="M6,1 V8" stroke="#c07838" stroke-width="1.5"/><path d="M3,6 L6,10 L9,6Z" fill="#c07838"/><rect x="1" y="12" width="10" height="2" fill="#d8a060"/><rect x="0" y="15" width="12" height="1.5" fill="#c07838"/></svg>
<span class="a" style="left:893px;top:584px;font-size:12.5px">Auto Lower</span>
<svg class="a" style="left:967px;top:580px" width="19" height="19"><path d="M3,3 Q6,0 9,3 Q10,6 8,8 L16,16" fill="none" stroke="#b0b0b0" stroke-width="3"/><path d="M9,9 L17,17" stroke="#d08840" stroke-width="4"/><circle cx="4" cy="4" r="2" fill="#fff"/></svg>
<g></g>
<svg class="a" style="left:988px;top:587px" width="10" height="12"><g fill="#b8b8b8"><rect x="7" y="2" width="2" height="2"/><rect x="4" y="5" width="2" height="2"/><rect x="7" y="5" width="2" height="2"/><rect x="1" y="8" width="2" height="2"/><rect x="4" y="8" width="2" height="2"/><rect x="7" y="8" width="2" height="2"/></g></svg>
<svg class="a" style="left:330px;top:202px;z-index:60" width="15" height="21"><path d="M1.5,1.2 L1.5,17.5 L5.5,14 L8,19.2 L10.2,18.4 L8,13.5 L13,13.5 Z" fill="#fff" stroke="#222" stroke-width="1.1" stroke-linejoin="round"/></svg>
<span class="a" style="left:888px;top:36px;font-size:11.5px;color:#ececec;letter-spacing:-0.2px">Michele Ramos</span>
<div class="a" style="left:972px;top:29px;width:26px;height:23px;background:#efefef;color:#e6e6e6;font-size:11px;line-height:23px;text-align:center">MR</div>
</body></html>
